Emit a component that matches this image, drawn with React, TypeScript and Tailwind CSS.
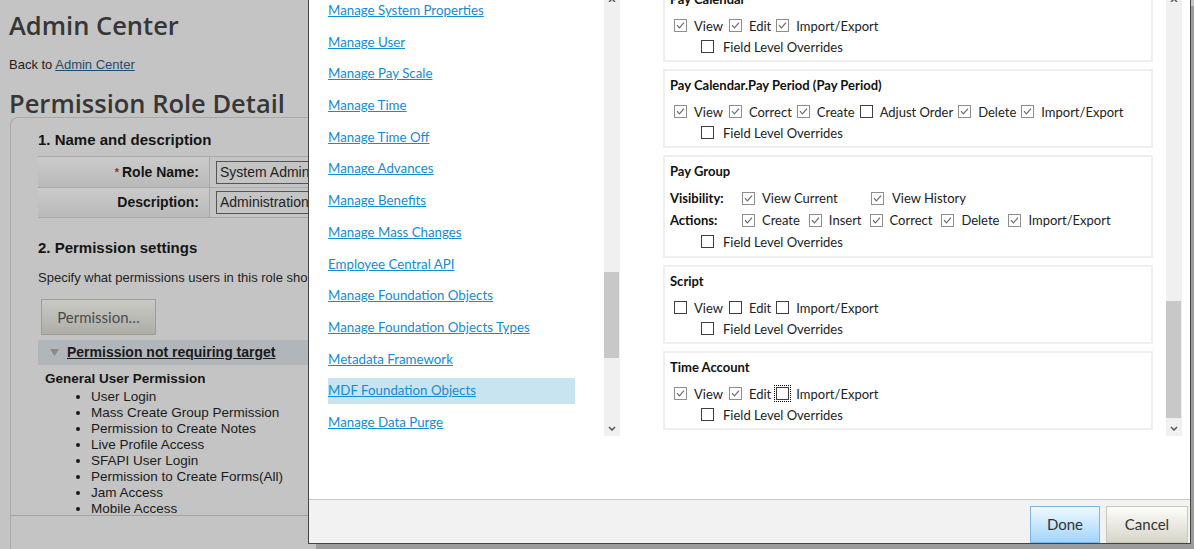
import React from "react";

const links = [
  "Manage System Properties",
  "Manage User",
  "Manage Pay Scale",
  "Manage Time",
  "Manage Time Off",
  "Manage Advances",
  "Manage Benefits",
  "Manage Mass Changes",
  "Employee Central API",
  "Manage Foundation Objects",
  "Manage Foundation Objects Types",
  "Metadata Framework",
  "MDF Foundation Objects",
  "Manage Data Purge",
];

const bullets = [
  "User Login",
  "Mass Create Group Permission",
  "Permission to Create Notes",
  "Live Profile Access",
  "SFAPI User Login",
  "Permission to Create Forms(All)",
  "Jam Access",
  "Mobile Access",
];

function Cb({ c, focus }: { c?: boolean; focus?: boolean }) {
  return (
    <span
      className={
        (c
          ? "border-[#8e8e8e] "
          : "border-[#3e3e3e] ") +
        (focus ? "outline-1 outline-dotted outline-black outline-offset-[1px] " : "") +
        "relative mb-[2px] inline-block h-[13px] w-[13px] shrink-0 border bg-white"
      }
    >
      {c && (
        <svg viewBox="0 0 11 11" className="absolute inset-0 h-[11px] w-[11px]">
          <path d="M2 5.2 L4.4 7.8 L9 2.6" stroke="#6a6a6a" strokeWidth="1.2" fill="none" />
        </svg>
      )}
    </span>
  );
}

function Item({ c, label, ml, focus }: { c?: boolean; label: string; ml: string; focus?: boolean }) {
  return (
    <span className={"flex items-center " + ml}>
      <Cb c={c} focus={focus} />
      <span className="ml-[7px]">{label}</span>
    </span>
  );
}

function Flo() {
  return (
    <div className="flex h-[21px] items-center pl-[31px]">
      <Cb />
      <span className="ml-[9px]">Field Level Overrides</span>
    </div>
  );
}

function Section({ title, children }: { title: string; children: React.ReactNode }) {
  return (
    <div className="border-2 border-[#efefef] pb-[2px] pl-[5px] pt-[5px]">
      <div className="h-[18px] text-[13px] font-bold leading-[18px] text-[#111]">{title}</div>
      {children}
    </div>
  );
}

function Scrollbar({ thumb }: { thumb: string }) {
  return (
    <div className="flex h-[436px] w-[16px] shrink-0 flex-col bg-[#f0f0f0]">
      <div className="flex h-[2px] justify-center">
        <svg width="8" height="2" viewBox="0 3 8 2">
          <path d="M1 5 L4 2 L7 5" stroke="#555" strokeWidth="1.4" fill="none" />
        </svg>
      </div>
      <div className={thumb + " w-[15px] bg-[#c8c8c8]"} />
      <div className="flex-1" />
      <div className="flex h-[16px] items-center justify-center">
        <svg width="8" height="5" viewBox="0 0 8 5">
          <path d="M1 1 L4 4 L7 1" stroke="#555" strokeWidth="1.5" fill="none" />
        </svg>
      </div>
    </div>
  );
}

export default function App() {
  return (
    <div className="relative h-[549px] w-[1194px] overflow-hidden bg-[#c4c4c4] font-['Liberation_Sans',Arial,sans-serif]">
      {/* Background page */}
      <div className="pl-[9px] pt-[6px]">
        <h1 className="font-['Open_Sans',sans-serif] text-[25.5px] font-semibold leading-[38px] text-[#363636]">
          Admin Center
        </h1>
        <div className="mt-[13px] text-[13px] leading-[16px] text-[#1e1e1e]">
          Back to <span className="text-[#1f4c6c] underline">Admin Center</span>
        </div>
        <h2 className="mt-[16px] font-['Open_Sans',sans-serif] text-[25.5px] font-semibold leading-[28px] text-[#363636]">
          Permission Role Detail
        </h2>
      </div>
      <div className="ml-[10px] flex h-[440px] w-[420px] flex-col rounded-tl-[8px] border-l border-t border-[#a9a9a9]">
        <div className="h-[397px] overflow-hidden pl-[27px] pt-[12px] text-[#151515]">
          <div className="text-[15px] font-bold leading-[20px]">1. Name and description</div>
          <div className="mt-[6px] border-t border-[#a9a9a9]">
            <div className="flex h-[31px] border-b border-[#a9a9a9]">
              <div className="flex w-[172px] items-center justify-end border-r border-[#a9a9a9] bg-linear-to-b from-[#cbcbcb] to-[#b9b9b9] pr-[10px] text-[14px] font-bold">
                <span className="mr-[3px] text-[11px] text-[#9b2a2a]">*</span>Role Name:
              </div>
              <div className="flex items-center pl-[6px]">
                <div className="flex h-[23px] w-[200px] items-center border border-[#555] pl-[3px] text-[14px] text-[#222]">
                  System Administrator
                </div>
              </div>
            </div>
            <div className="flex h-[30px] border-b border-[#a9a9a9]">
              <div className="flex w-[172px] items-center justify-end border-r border-[#a9a9a9] bg-linear-to-b from-[#cbcbcb] to-[#b9b9b9] pr-[10px] text-[14px] font-bold">
                Description:
              </div>
              <div className="flex items-center pl-[6px]">
                <div className="flex h-[23px] w-[200px] items-center border border-[#555] pl-[3px] text-[14px] text-[#222]">
                  Administration
                </div>
              </div>
            </div>
          </div>
          <div className="mt-[20px] text-[15px] font-bold leading-[20px]">2. Permission settings</div>
          <div className="mt-[12px] whitespace-nowrap text-[13px] leading-[16px] text-[#1e1e1e]">
            Specify what permissions users in this role should have.
          </div>
          <div className="ml-[3px] mt-[13px] flex h-[36px] w-[115px] items-center justify-center border border-[#9d9d97] bg-linear-to-b from-[#c9c9c5] to-[#aeaea7] font-['Lato',sans-serif] text-[15px] text-[#4b4b4b]">
            Permission…
          </div>
          <div className="mt-[5px] flex h-[25px] items-center bg-[#b1b6bb] pl-[12px]">
            <svg width="9" height="7" viewBox="0 0 9 7">
              <path d="M0 0 L9 0 L4.5 7 Z" fill="#8a8a8a" />
            </svg>
            <span className="ml-[8px] text-[14px] font-bold text-[#1a1a1a] underline">
              Permission not requiring target
            </span>
          </div>
          <div className="mt-[6px] pl-[7px] text-[13.5px] font-bold leading-[16px]">General User Permission</div>
          <ul className="mt-[2px] list-disc pl-[53px] text-[13.5px] leading-[16px] text-[#1a1a1a]">
            {bullets.map((b) => (
              <li key={b}>{b}</li>
            ))}
          </ul>
        </div>
        <div className="flex-1 border-t border-[#a3a3a3]" />
      </div>

      {/* Modal dialog */}
      <div className="absolute left-[308px] top-0 flex h-[544px] w-[883px] flex-col border-x border-b border-[#444] bg-white font-['Lato',sans-serif] shadow-[8px_6px_0_rgba(0,0,0,0.2)]">
        <div className="flex flex-1 overflow-hidden">
          {/* left list */}
          <div className="flex w-[311px] shrink-0 items-start">
            <div className="-mt-[2px] flex w-[295px] flex-col gap-[5.7px] pl-[19px]">
              {links.map((l) => (
                <div
                  key={l}
                  className={
                    (l === "MDF Foundation Objects" ? "bg-[#c8e4f1] " : "") +
                    "flex h-[26px] w-[247px] items-center"
                  }
                >
                  <span className="text-[13.3px] text-[#168bd0] underline decoration-[#168bd0]">{l}</span>
                </div>
              ))}
            </div>
            <Scrollbar thumb="mt-[270px] h-[86px]" />
          </div>
          {/* right permissions */}
          <div className="flex flex-1 items-start pl-[43px]">
            <div className="-mt-[17px] flex w-[490px] shrink-0 flex-col gap-[7px] text-[13px] text-[#222]">
              <Section title="Pay Calendar">
                <div className="mt-[8px] flex h-[21px] items-center pl-[4px]">
                  <Item c label="View" ml="" />
                  <Item c label="Edit" ml="ml-[6px]" />
                  <Item c label="Import/Export" ml="ml-[5px]" />
                </div>
                <Flo />
              </Section>
              <Section title="Pay Calendar.Pay Period (Pay Period)">
                <div className="mt-[8px] flex h-[21px] items-center pl-[4px]">
                  <Item c label="View" ml="" />
                  <Item c label="Correct" ml="ml-[6px]" />
                  <Item c label="Create" ml="ml-[5px]" />
                  <Item label="Adjust Order" ml="ml-[5px]" />
                  <Item c label="Delete" ml="ml-[5px]" />
                  <Item c label="Import/Export" ml="ml-[5px]" />
                </div>
                <Flo />
              </Section>
              <div className="border-2 border-[#efefef] pb-[3px] pl-[5px] pt-[5px]">
                <div className="h-[18px] text-[13px] font-bold leading-[18px] text-[#111]">Pay Group</div>
                <div className="mt-[8px] flex h-[22px] items-center">
                  <span className="w-[72px] font-bold text-[#111]">Visibility:</span>
                  <span className="flex w-[129px]">
                    <Item c label="View Current" ml="" />
                  </span>
                  <span className="flex items-center">
                    <Cb c />
                    <span className="ml-[8px]">View History</span>
                  </span>
                </div>
                <div className="flex h-[22px] items-center">
                  <span className="w-[72px] font-bold text-[#111]">Actions:</span>
                  <Item c label="Create" ml="" />
                  <Item c label="Insert" ml="ml-[9px]" />
                  <Item c label="Correct" ml="ml-[8px]" />
                  <Item c label="Delete" ml="ml-[9px]" />
                  <Item c label="Import/Export" ml="ml-[9px]" />
                </div>
                <div className="flex h-[21px] items-center pl-[31px]">
                  <Cb />
                  <span className="ml-[9px]">Field Level Overrides</span>
                </div>
              </div>
              <Section title="Script">
                <div className="mt-[8px] flex h-[21px] items-center pl-[4px]">
                  <Item label="View" ml="" />
                  <Item label="Edit" ml="ml-[6px]" />
                  <Item label="Import/Export" ml="ml-[5px]" />
                </div>
                <Flo />
              </Section>
              <Section title="Time Account">
                <div className="mt-[8px] flex h-[21px] items-center pl-[4px]">
                  <Item c label="View" ml="" />
                  <Item c label="Edit" ml="ml-[6px]" />
                  <Item label="Import/Export" ml="ml-[5px]" focus />
                </div>
                <Flo />
              </Section>
            </div>
            <div className="ml-[13px]">
              <Scrollbar thumb="mt-[299px] h-[117px]" />
            </div>
          </div>
        </div>
        <div className="flex h-[44px] shrink-0 items-end justify-end gap-[6px] border-t border-[#c8c8c8] bg-[#f2f2f2] pr-[2px]">
          <button className="h-[37px] w-[70px] border border-[#7cb8e6] bg-linear-to-b from-[#f0f9ff] to-[#a1d5fd] text-[15px] text-[#333]">
            Done
          </button>
          <button className="h-[37px] w-[82px] border border-[#c9c9b5] bg-linear-to-b from-[#fdfdfb] to-[#d6d6ca] text-[15px] text-[#333]">
            Cancel
          </button>
        </div>
      </div>
    </div>
  );
}
